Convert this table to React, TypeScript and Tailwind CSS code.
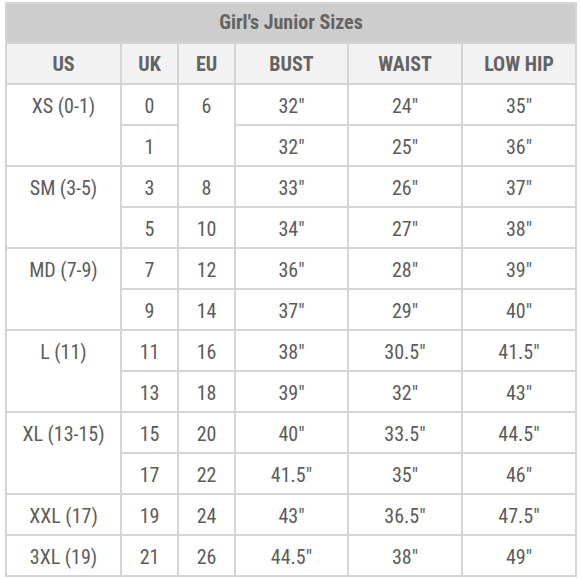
import React from "react";

type Row = { us?: string; span?: number; uk: string; eu?: string; euSpan?: number; bust: string; waist: string; hip: string };

const rows: Row[] = [
  { us: "XS (0-1)", span: 2, uk: "0", eu: "6", euSpan: 2, bust: '32"', waist: '24"', hip: '35"' },
  { uk: "1", bust: '32"', waist: '25"', hip: '36"' },
  { us: "SM (3-5)", span: 2, uk: "3", eu: "8", bust: '33"', waist: '26"', hip: '37"' },
  { uk: "5", eu: "10", bust: '34"', waist: '27"', hip: '38"' },
  { us: "MD (7-9)", span: 2, uk: "7", eu: "12", bust: '36"', waist: '28"', hip: '39"' },
  { uk: "9", eu: "14", bust: '37"', waist: '29"', hip: '40"' },
  { us: "L (11)", span: 2, uk: "11", eu: "16", bust: '38"', waist: '30.5"', hip: '41.5"' },
  { uk: "13", eu: "18", bust: '39"', waist: '32"', hip: '43"' },
  { us: "XL (13-15)", span: 2, uk: "15", eu: "20", bust: '40"', waist: '33.5"', hip: '44.5"' },
  { uk: "17", eu: "22", bust: '41.5"', waist: '35"', hip: '46"' },
  { us: "XXL (17)", span: 1, uk: "19", eu: "24", bust: '43"', waist: '36.5"', hip: '47.5"' },
  { us: "3XL (19)", span: 1, uk: "21", eu: "26", bust: '44.5"', waist: '38"', hip: '49"' },
];

const td = "border-2 border-[#d5d5d5] align-top text-center pt-[8px] h-[41px] p-0 leading-[26px]";

export default function App() {
  return (
    <div className="w-[580px] h-[579px] bg-white pt-[2px] pl-[5px]" style={{ fontFamily: "Roboto, 'Liberation Sans', sans-serif" }}>
      <table className="border-collapse border-2 border-[#d5d5d5] table-fixed w-[570px] text-[#5c5c5c] text-[20px] font-stretch-condensed">
        <colgroup>
          <col className="w-[115px]" />
          <col className="w-[57px]" />
          <col className="w-[57px]" />
          <col className="w-[113px]" />
          <col className="w-[114px]" />
          <col className="w-[114px]" />
        </colgroup>
        <thead>
          <tr>
            <th colSpan={6} className="bg-[#cdcdcd] border-2 border-[#d5d5d5] h-[40px] text-[20px] font-bold text-[#646464] text-center leading-[26px] pb-[2px]">
              Girl's Junior Sizes
            </th>
          </tr>
          <tr>
            {["US", "UK", "EU", "BUST", "WAIST", "LOW HIP"].map((h) => (
              <th key={h} className="bg-[#f2f2f2] border-2 border-[#d5d5d5] h-[41px] font-bold text-[20px] text-[#646464] text-center leading-[26px]">
                {h}
              </th>
            ))}
          </tr>
        </thead>
        <tbody>
          {rows.map((r, i) => (
            <tr key={i}>
              {r.us !== undefined && (
                <td rowSpan={r.span} className={td}>{r.us}</td>
              )}
              <td className={td}>{r.uk}</td>
              {r.eu !== undefined && (
                <td rowSpan={r.euSpan ?? 1} className={td}>{r.eu}</td>
              )}
              <td className={td}>{r.bust}</td>
              <td className={td}>{r.waist}</td>
              <td className={td}>{r.hip}</td>
            </tr>
          ))}
        </tbody>
      </table>
    </div>
  );
}
